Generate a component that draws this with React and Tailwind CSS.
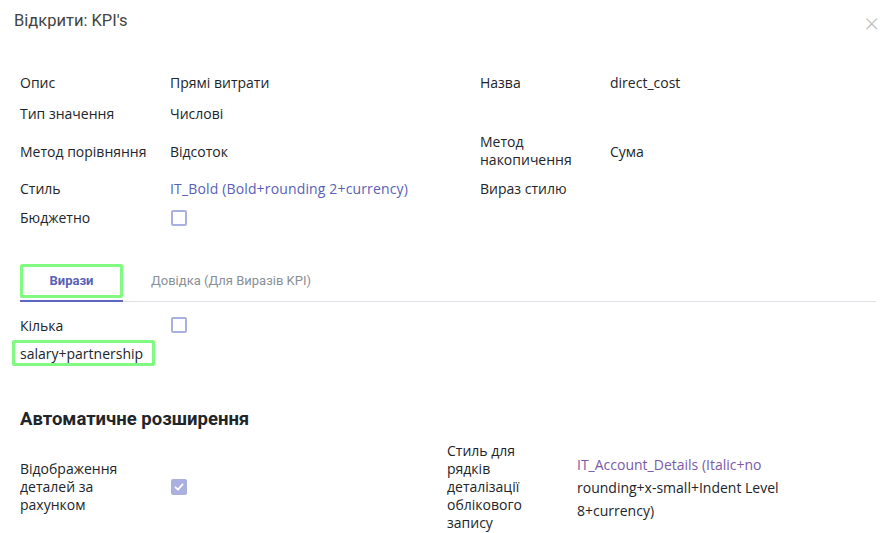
export default function App() {
  const label = "text-[14px] text-[#212529]"
  const value = "text-[14px] text-[#212529]"

  return (
    <div className="w-[889px] h-[533px] bg-white overflow-hidden font-['Open_Sans','Noto_Sans',sans-serif] relative">
      {/* Заголовок */}
      <div className="flex items-start justify-between pl-[14px] pr-[10px] pt-[9px] h-[67px]">
        <h1 className="text-[16.5px] text-[#444] font-['Roboto',sans-serif]">Відкрити: KPI's</h1>
        <button className="text-[#bdbdbd] text-[26px] font-light leading-none mt-[1px]">×</button>
      </div>

      {/* Поля */}
      <div className="pl-[20px] pr-[13px]">
        <div className="grid grid-cols-[150px_310px_130px_1fr] items-center">
          <div className={`${label} h-[31px] flex items-center`}>Опис</div>
          <div className={`${value} h-[31px] flex items-center`}>Прямі витрати</div>
          <div className={`${label} h-[31px] flex items-center`}>Назва</div>
          <div className={`${value} h-[31px] flex items-center`}>direct_cost</div>

          <div className={`${label} h-[31px] flex items-center`}>Тип значення</div>
          <div className={`${value} h-[31px] flex items-center`}>Числові</div>
          <div></div>
          <div></div>

          <div className={`${label} h-[44px] flex items-center`}>Метод порівняння</div>
          <div className={`${value} h-[44px] flex items-center`}>Відсоток</div>
          <div className={`${label} h-[44px] flex items-center leading-[18px]`}>Метод<br />накопичення</div>
          <div className={`${value} h-[44px] flex items-center`}>Сума</div>

          <div className={`${label} h-[30px] flex items-center`}>Стиль</div>
          <div className="text-[14px] text-[#5a5fb8] h-[30px] flex items-center tracking-[0.15px]">IT_Bold (Bold+rounding 2+currency)</div>
          <div className={`${label} h-[30px] flex items-center`}>Вираз стилю</div>
          <div></div>

          <div className={`${label} h-[29px] flex items-center`}>Бюджетно</div>
          <div className="h-[29px] flex items-center pl-[1px]">
            <span className="w-[16px] h-[16px] border-2 border-[#aab0e0] rounded-[2px]"></span>
          </div>
          <div></div>
          <div></div>
        </div>
      </div>

      {/* Вкладки */}
      <div className="mt-[32px] ml-[20px] mr-[13px] border-b border-[#dee2e6] flex">
        <div className="w-[103px] border-b-2 border-[#5c67c0] -mb-px pb-[2px]">
          <div className="h-[34px] border-[3px] border-[#80fa80] rounded-[2px] flex items-center justify-center text-[13px] font-bold text-[#5a61b6] font-['Roboto',sans-serif]">
            Вирази
          </div>
        </div>
        <div className="h-[34px] flex items-center pl-[28px] text-[13px] text-[#8a8f96] font-['Roboto',sans-serif]">
          Довідка (Для Виразів KPI)
        </div>
      </div>

      <div className="pl-[20px]">
        <div className="flex items-center h-[36px] pt-[10px]">
          <div className={`${label} w-[151px]`}>Кілька</div>
          <span className="w-[16px] h-[16px] border-2 border-[#aab0e0] rounded-[2px]"></span>
        </div>
        <div className="-ml-[8px] mt-[2px] w-[143px] h-[26px] border-[3px] border-[#80fa80] rounded-[2px] flex items-center pl-[5px] text-[14px] text-[#212529]">
          salary+partnership
        </div>
      </div>

      {/* Автоматичне розширення */}
      <h2 className="pl-[20px] mt-[40px] h-[26px] leading-[26px] text-[18.5px] font-bold text-[#212529] font-['Roboto',sans-serif]">Автоматичне розширення</h2>

      <div className="pl-[20px] pr-[13px] mt-[10px] flex items-center h-[90px]">
        <div className="flex items-center w-[427px]">
          <div className={`${label} w-[151px] leading-[18px]`}>Відображення<br />деталей за<br />рахунком</div>
          <span className="w-[16px] h-[16px] bg-[#aab0e0] rounded-[2px] flex items-center justify-center">
            <svg width="12" height="12" viewBox="0 0 12 12" fill="none">
              <path d="M2.5 6.3 L5 8.7 L9.6 3.4" stroke="white" strokeWidth="1.8" strokeLinecap="round" strokeLinejoin="round" />
            </svg>
          </span>
        </div>
        <div className="flex items-center">
          <div className={`${label} w-[130px] leading-[18px]`}>Стиль для<br />рядків<br />деталізації<br />облікового<br />запису</div>
          <div className="w-[240px] text-[14px] leading-[23px] text-[#212529]">
            <span className="text-[#7a5aa8]">IT_Account_Details (Italic+no</span><br />
            rounding+x-small+Indent Level<br />
            8+currency)
          </div>
        </div>
      </div>
    </div>
  )
}
